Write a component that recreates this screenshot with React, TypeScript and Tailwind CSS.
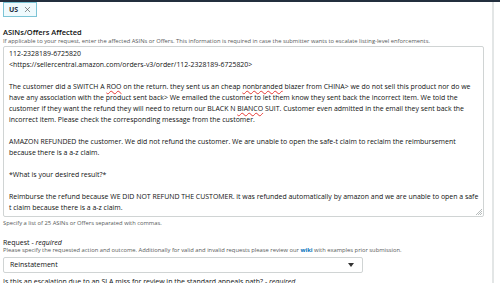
import { X } from 'lucide-react'

const font = { fontFamily: '"Open Sans", "Liberation Sans", Arial, sans-serif' }

function Squiggle({ children }: { children: React.ReactNode }) {
  return <span className="underline decoration-wavy decoration-[#e53935] decoration-[0.8px] underline-offset-[1px]">{children}</span>
}

const Line = ({ children }: { children?: React.ReactNode }) => (
  <div className="h-[11px] leading-[11px] whitespace-nowrap">{children ?? '\u00a0'}</div>
)

export default function App() {
  return (
    <div className="w-[500px] h-[283px] overflow-hidden bg-white text-[#0f1111]" style={font}>
      <div className="h-[2px] bg-[#232f3e]" />
      <div className="w-[494px] h-[281px] border-r-2 border-[#e3e6e6] pl-[3px]">
        {/* marketplace chip */}
        <div className="flex">
          <div className="flex items-center gap-[5px] h-[15px] pl-[5px] pr-[4px] border border-[#7cc4d6] bg-[#effafd]">
            <span className="text-[7px] leading-none font-bold text-[#232f3e]">US</span>
            <X className="w-[9px] h-[9px] text-[#444]" strokeWidth={1.6} />
          </div>
        </div>

        <div className="mt-[10px] text-[7.5px] font-semibold leading-[10px]">ASINs/Offers Affected</div>
        <div className="text-[5.8px] leading-[9px] text-[#565959] whitespace-nowrap">
          If applicable to your request, enter the affected ASINs or Offers. This information is required in case the submitter wants to escalate listing-level enforcements.
        </div>

        <div className="relative w-[481px] h-[171px] border border-[#d0d4d4] rounded-[2px] pl-[5px] pt-[1px] text-[6.95px]">
          <Line>112-2328189-6725820</Line>
          <Line>&lt;https://sellercentral.amazon.com/orders-v3/order/112-2328189-6725820&gt;</Line>
          <Line />
          <Line>The customer did a SWITCH A <Squiggle>ROO</Squiggle> on the return. they sent us an cheap <Squiggle>nonbranded</Squiggle> blazer from CHINA&gt; we do not sell this product nor do we</Line>
          <Line>have any association with the product sent back&gt; We emailed the customer to let them know they sent back the incorrect item. We told the</Line>
          <Line>customer if they want the refund they will need to return our BLACK N <Squiggle>BIANCO</Squiggle> SUIT. Customer even admitted in the email they sent back the</Line>
          <Line>incorrect item. Please check the corresponding message from the customer.</Line>
          <Line />
          <Line>AMAZON REFUNDED the customer. We did not refund the customer. We are unable to open the safe-t claim to reclaim the reimbursement</Line>
          <Line>because there is a a-z claim.</Line>
          <Line />
          <Line>*What is your desired result?*</Line>
          <Line />
          <Line>Reimburse the refund because WE DID NOT REFUND THE CUSTOMER. it was refunded automatically by amazon and we are unable to open a safe</Line>
          <Line>t claim because there is a a-z claim.</Line>
          <svg className="absolute right-[1px] bottom-[1px] w-[6px] h-[6px]" viewBox="0 0 6 6">
            <path d="M6 0L0 6M6 2L2 6M6 4L4 6" stroke="#9aa0a0" strokeWidth="0.7" />
          </svg>
        </div>

        <div className="mt-[2px] text-[5.8px] leading-[9px] text-[#565959]">Specify a list of 25 ASINs or Offers separated with commas.</div>

        <div className="mt-[10px] text-[7px] leading-[9px]">
          Request - <span className="italic">required</span>
        </div>
        <div className="text-[5.8px] leading-[7px] text-[#565959] whitespace-nowrap">
          Please specify the requested action and outcome. Additionally for valid and invalid requests please review our{' '}
          <span className="font-bold text-[#0073bb]">wiki</span> with examples prior submission.
        </div>

        <div className="mt-[3px] w-[360px] h-[16px] border border-[#d0d4d4] rounded-[2px] flex items-center justify-between pl-[6px] pr-[8px]">
          <span className="text-[7px] text-[#0f1111]">Reinstatement</span>
          <svg className="w-[6px] h-[4px]" viewBox="0 0 6 4">
            <path d="M0 0H6L3 4Z" fill="#333" />
          </svg>
        </div>

        <div className="mt-[4px] text-[7px] leading-[9px] whitespace-nowrap">
          Is this an escalation due to an SLA miss for review in the standard appeals path? - <span className="italic">required</span>
        </div>
      </div>
    </div>
  )
}
